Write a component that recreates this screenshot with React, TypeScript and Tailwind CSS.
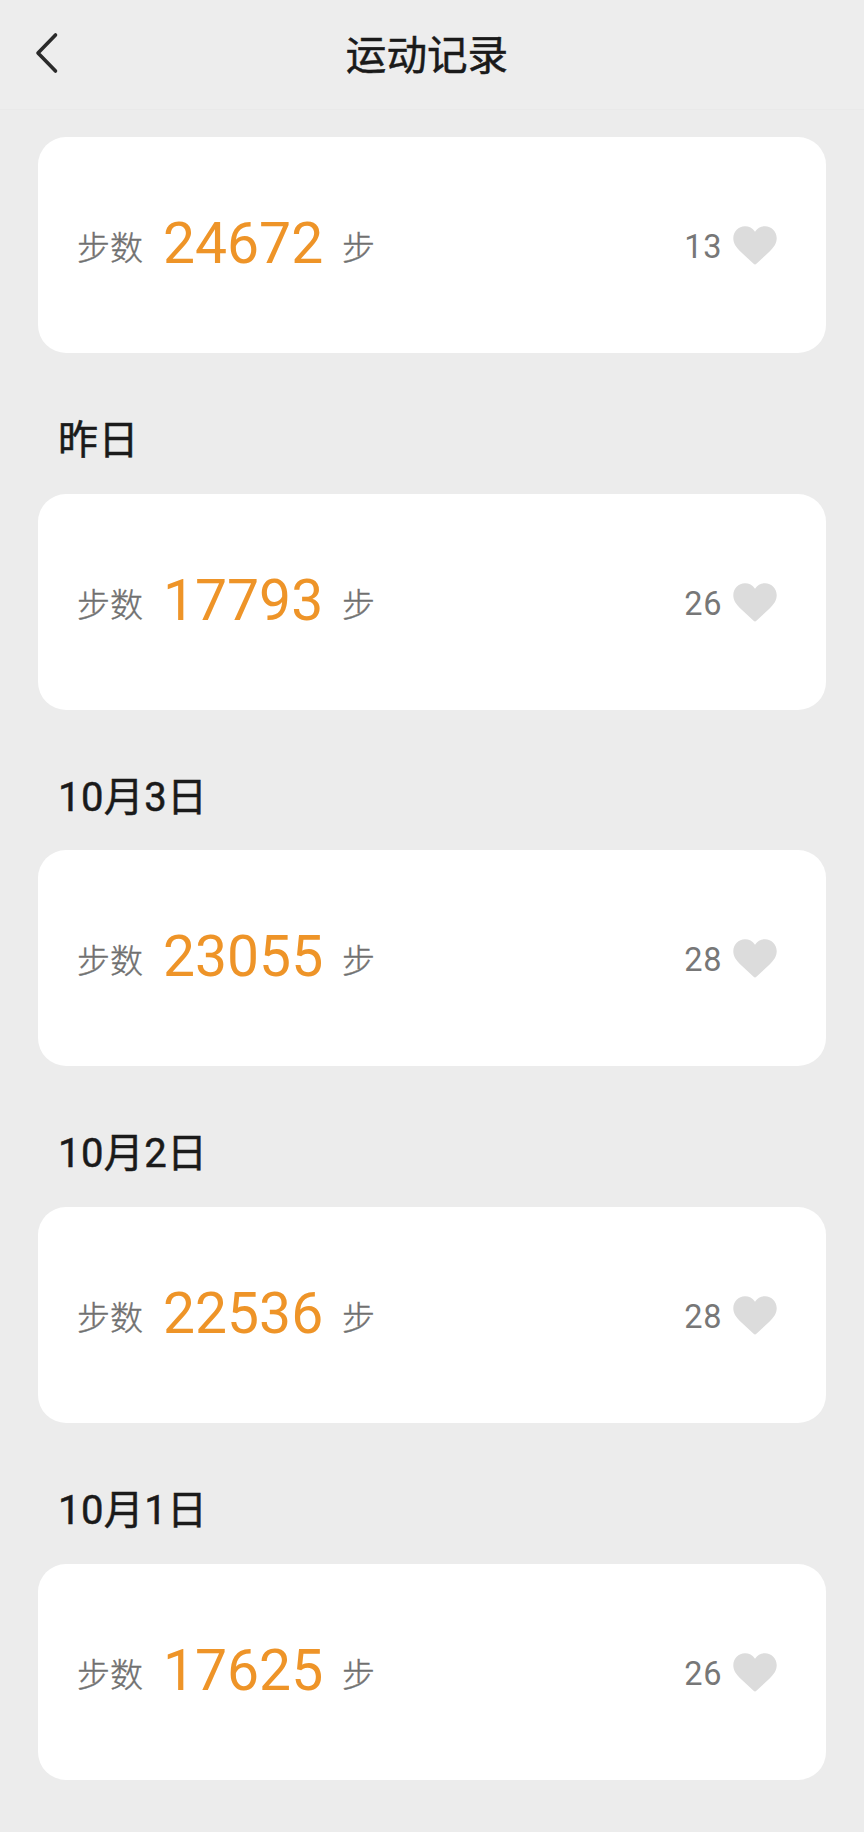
const records = [
  { date: "", steps: 24672, likes: 13 },
  { date: "昨日", steps: 17793, likes: 26 },
  { date: "10月3日", steps: 23055, likes: 28 },
  { date: "10月2日", steps: 22536, likes: 28 },
  { date: "10月1日", steps: 17625, likes: 26 },
];

function BackIcon() {
  return (
    <svg
      className="mb-[3px] ml-[34px] h-[42px] w-[26px]"
      viewBox="0 0 26 42"
      fill="none"
      stroke="#2a2a2a"
      strokeWidth="3.6"
      strokeLinecap="round"
      strokeLinejoin="round"
    >
      <path d="M21.500 3L4 21L21.500 39" />
    </svg>
  );
}

function Heart() {
  return (
    <svg className="ml-[10.600px] h-[39px] w-[44px]" viewBox="0 0 44 39" fill="#dcdcdc">
      <path d="M22 5.700C19.500 2 16 0.200 12 0.200C5.500 0.200 0.300 5.500 0.300 12C0.300 17.500 3.200 21.500 8.200 26.300L20.600 37.800Q22 39 23.400 37.800L35.800 26.300C40.800 21.500 43.700 17.500 43.700 12C43.700 5.500 38.500 0.200 32 0.200C28 0.200 24.500 2 22 5.700Z" />
    </svg>
  );
}

export default function App() {
  return (
    <div className="flex h-[1832px] w-[864px] flex-col overflow-hidden bg-[#ececec] font-[Roboto,'Noto_Sans_CJK_SC',sans-serif]">
      <header className="grid h-[110px] shrink-0 grid-cols-[120px_1fr_130px] items-center border-b border-[#e9e9e9] bg-[#ededed]">
        <button aria-label="返回">
          <BackIcon />
        </button>
        <h1 className="pt-[4px] text-center text-[40.600px] text-[#1a1a1a] [-webkit-text-stroke:0.5px_#1a1a1a]">
          运动记录
        </h1>
      </header>
      <main className="px-[38px] pt-[27px]">
        {records.map((r, i) => (
          <section key={r.steps}>
            {r.date && (
              <h2
                className={`flex items-center pt-[35px] pl-[20px] text-[40px] tracking-[0.400px] text-[#1a1a1a] [-webkit-text-stroke:0.5px_#1a1a1a] ${
                  i === 2 ? "h-[140px]" : "h-[141px]"
                }`}
              >
                {r.date}
              </h2>
            )}
            <div className="flex h-[216px] items-center justify-between rounded-[28px] bg-white pr-[49px] pl-[39px]">
              <div className="flex items-baseline pb-[3px] text-[33px] font-light text-[#707070] [-webkit-text-stroke:0.4px_#707070]">
                <span className="relative -top-[3px]">步数</span>
                <span className="ml-[20px] w-[160px] text-[57px] font-normal text-[#ee9428] [-webkit-text-stroke:0px]">
                  {r.steps}
                </span>
                <span className="relative -top-[3px] ml-[19px]">步</span>
              </div>
              <div className="flex items-center text-[32.500px] tracking-[0.800px] text-[#777]">
                <span className="pt-[4px]">{r.likes}</span>
                <Heart />
              </div>
            </div>
          </section>
        ))}
      </main>
    </div>
  );
}
